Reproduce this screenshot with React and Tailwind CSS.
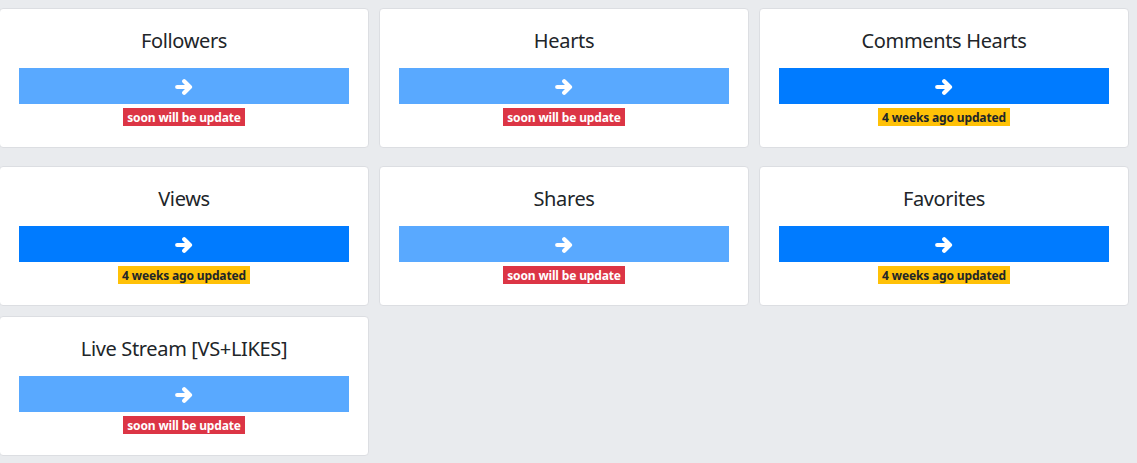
import React from "react";

const cards = [
  { title: "Followers", active: false },
  { title: "Hearts", active: false },
  { title: "Comments Hearts", active: true },
  { title: "Views", active: true },
  { title: "Shares", active: false },
  { title: "Favorites", active: true },
  { title: "Live Stream [VS+LIKES]", active: false },
];

function Arrow() {
  return (
    <svg
      viewBox="0 0 18 16"
      width="18"
      height="16"
      fill="none"
      stroke="currentColor"
      strokeWidth="4.2"
      strokeLinecap="round"
      strokeLinejoin="round"
      className="mt-[1px]"
    >
      <path d="M2.2 8H14.2" />
      <path d="M9.2 2.3L15 8L9.2 13.7" />
    </svg>
  );
}

function Card({ title, active }) {
  return (
    <div className="h-[140px] bg-white border border-[#dcdee2] rounded-[4px] px-[19px] pt-[20px] flex flex-col items-center">
      <div className="h-[24px] leading-[24px] text-[20px] tracking-[-0.35px] text-[#212529] font-['Noto_Sans',sans-serif] mb-[15px]">
        {title}
      </div>
      <div
        className={
          "w-full h-[36px] flex items-center justify-center text-white " +
          (active ? "bg-[#007bff]" : "bg-[#59a9ff]")
        }
      >
        <Arrow />
      </div>
      {active ? (
        <span className="mt-[4px] h-[18px] px-[4px] bg-[#ffc107] text-[#212529] text-[12px] tracking-[-0.15px] leading-[19px] font-bold font-['Noto_Sans',sans-serif]">
          4 weeks ago updated
        </span>
      ) : (
        <span className="mt-[4px] h-[18px] px-[4px] bg-[#dc3545] text-white text-[12px] tracking-[-0.15px] leading-[19px] font-bold font-['Noto_Sans',sans-serif]">
          soon will be update
        </span>
      )}
    </div>
  );
}

export default function App() {
  return (
    <div className="min-h-screen w-full bg-[#e9ebee] pt-[8px] overflow-hidden">
      <div className="ml-[-1px] w-[1130px]">
        <div className="grid grid-cols-[370px_370px_370px] gap-x-[10px] mb-[18px]">
          {cards.slice(0, 3).map((c) => (
            <Card key={c.title} {...c} />
          ))}
        </div>
        <div className="grid grid-cols-[370px_370px_370px] gap-x-[10px] mb-[10px]">
          {cards.slice(3, 6).map((c) => (
            <Card key={c.title} {...c} />
          ))}
        </div>
        <div className="grid grid-cols-[370px_370px_370px] gap-x-[10px]">
          {cards.slice(6).map((c) => (
            <Card key={c.title} {...c} />
          ))}
        </div>
      </div>
    </div>
  );
}
